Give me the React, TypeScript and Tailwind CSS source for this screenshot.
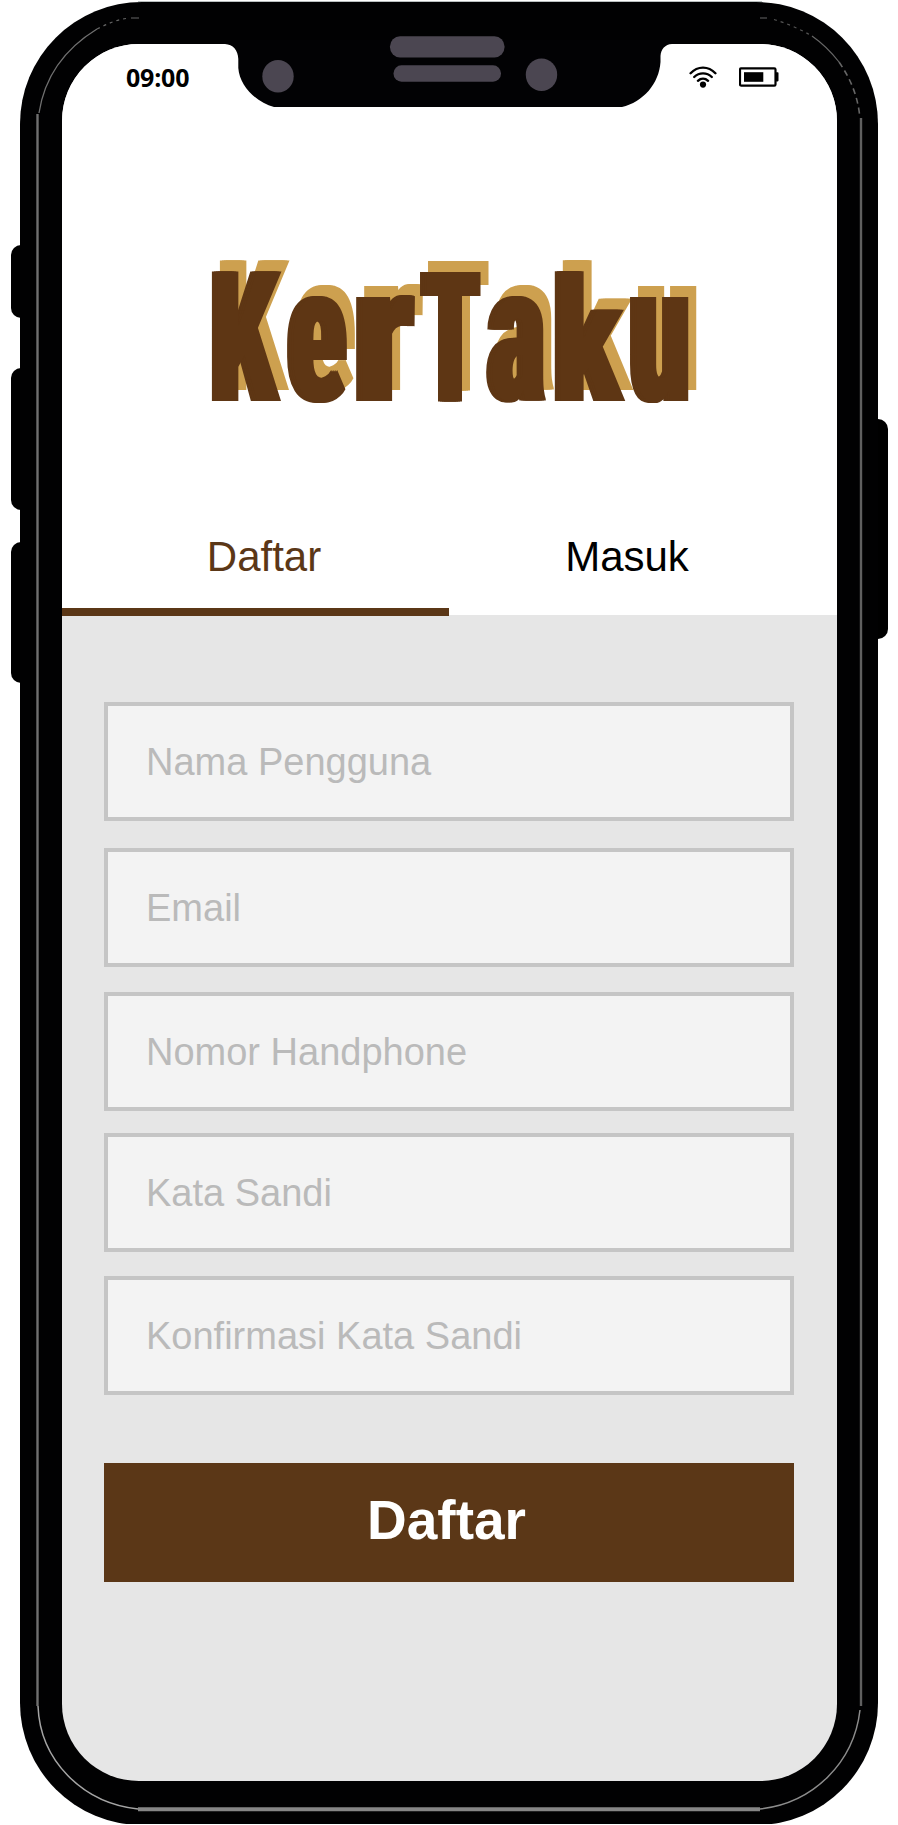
const letters = [
  { char: 'K', transform: 'translate(209 401) scale(1.224 1.82)' },
  { char: 'e', transform: 'translate(286.1 401) scale(1.257 1.95)' },
  { char: 'r', transform: 'translate(350.9 401) scale(1.863 1.976)' },
  { char: 'T', transform: 'translate(420.6 401) scale(1.074 1.82)' },
  { char: 'a', transform: 'translate(486 401) scale(1.273 1.95)' },
  { char: 'k', transform: 'translate(551.6 401) scale(1.423 1.72)' },
  { char: 'u', transform: 'translate(628.1 401) scale(1.257 1.976)' },
];

const fields = [
  { label: 'Nama Pengguna', gap: '' },
  { label: 'Email', gap: 'mt-[27px] pt-px' },
  { label: 'Nomor Handphone', gap: 'mt-[25px]' },
  { label: 'Kata Sandi', gap: 'mt-[22px]' },
  { label: 'Konfirmasi Kata Sandi', gap: 'mt-6' },
];

function Logo() {
  return (
    <svg viewBox="190 240 530 180" className="ml-[128px] h-[180px] w-[530px] shrink-0 overflow-visible" role="img" aria-label="KerTaku">
      <defs>
        <filter id="heavy" filterUnits="userSpaceOnUse" x="190" y="240" width="530" height="180" colorInterpolationFilters="sRGB">
          <feOffset in="SourceGraphic" dx="-3" dy="0" result="a" />
          <feOffset in="SourceGraphic" dx="-1" dy="0" result="b" />
          <feOffset in="SourceGraphic" dx="1" dy="0" result="c" />
          <feOffset in="SourceGraphic" dx="3" dy="0" result="d" />
          <feMerge result="face">
            <feMergeNode in="a" />
            <feMergeNode in="b" />
            <feMergeNode in="c" />
            <feMergeNode in="d" />
          </feMerge>
          <feOffset in="face" dx="8" dy="-11" result="moved" />
          <feFlood floodColor="#cda04f" />
          <feComposite in2="moved" operator="in" result="shade" />
          <feMerge>
            <feMergeNode in="shade" />
            <feMergeNode in="face" />
          </feMerge>
        </filter>
      </defs>
      <g filter="url(#heavy)" className="fill-[#5e3614] font-['Roboto'] text-[100px] font-black [font-stretch:75%]">
        {letters.map((l, i) => (
          <text key={i} transform={l.transform}>{l.char}</text>
        ))}
      </g>
    </svg>
  );
}

function Wifi() {
  return (
    <svg viewBox="0 0 28 22" className="h-[22px] w-7" fill="none" stroke="#000" strokeWidth="2.4" strokeLinecap="round">
      <path d="M1.600 7.200C8.600 -.3 19.400 -.3 26.400 7.200" />
      <path d="M5.200 11c5-4.900 12.600-4.900 17.600 0" />
      <path d="M8.900 14.800c3-2.800 7.200-2.800 10.200 0" />
      <circle cx="14" cy="18.600" r="3.100" fill="#000" stroke="none" />
    </svg>
  );
}

function Battery() {
  return (
    <svg viewBox="0 0 40 20" className="h-5 w-10">
      <rect x="1" y="1.300" width="35.500" height="17.400" rx="1.200" fill="none" stroke="#000" strokeWidth="2.200" />
      <rect x="5" y="5.200" width="19.300" height="9.600" />
      <rect x="36.500" y="5.200" width="3" height="9.200" rx=".8" />
    </svg>
  );
}

function Notch() {
  return (
    <svg viewBox="220 40 460 70" className="absolute left-[158px] -top-1 h-[70px] w-[460px]">
      <path d="M220 40V44H225C233 44.500 238 50 238.300 59V68C239.500 86 256 102 274 107H622C643 102 659 84 660.500 62V56C661 49 665 44.500 672 44H680V40Z" fill="#020204" />
    </svg>
  );
}

function Speaker() {
  return (
    <svg viewBox="250 30 320 70" className="absolute left-[250px] top-[30px] h-[70px] w-[320px]" fill="#4b4651">
      <ellipse cx="278" cy="76.300" rx="15.700" ry="16.300" />
      <rect x="390" y="36.300" width="114.500" height="21.200" rx="10" />
      <rect x="393.500" y="65.300" width="107.500" height="16.400" rx="8" />
      <ellipse cx="541.500" cy="74.800" rx="15.700" ry="16.300" />
    </svg>
  );
}

function Highlights() {
  return (
    <svg viewBox="0 0 898 1825" className="pointer-events-none absolute left-0 top-0 h-[1825px] w-[898px]" fill="none">
      <path d="M138 1.500H762" stroke="#b9bfbf" />
      <path d="M37.500 114V1706" stroke="#707070" strokeWidth="2.400" />
      <path d="M861 118V1706" stroke="#606060" strokeWidth="2.400" />
      <path d="M138 1809.300H760" stroke="#868686" strokeWidth="4" />
      <path d="M38 1706C40 1760 82 1803 138 1809" stroke="#a5a5a5" strokeWidth="1.500" />
      <path d="M860 1710C854 1762 814 1803 760 1809" stroke="#8c8c8c" strokeWidth="1.500" />
      <path d="M39 113C45 74 66 48 97 29" stroke="#707070" strokeWidth="1.300" />
      <path d="M97 29C107 24 116 20 126 18.500" stroke="#666" strokeWidth="1.200" strokeDasharray="3 4" />
      <path d="M131 18H139M760 18H767" stroke="#666" />
      <path d="M774 19.500C786 23 800 29 812 36" stroke="#555" strokeWidth="1.200" strokeDasharray="3 4" />
      <path d="M812 36C822 43 832 53 839 62" stroke="#666" strokeWidth="1.200" />
      <path d="M839 62C850 78 857 94 859.500 114" stroke="#666" strokeWidth="1.600" strokeDasharray="6 4" />
    </svg>
  );
}

export default function App() {
  return (
    <main className="relative h-[1825px] w-[898px] overflow-hidden bg-white font-['Liberation_Sans',sans-serif]">
      <div className="absolute left-[11px] top-[245px] h-[73px] w-6 rounded-[10px] bg-black" />
      <div className="absolute left-[11px] top-[368px] h-[142px] w-6 rounded-[10px] bg-black" />
      <div className="absolute left-[11px] top-[542px] h-[141px] w-6 rounded-[10px] bg-black" />
      <div className="absolute left-[864px] top-[419px] h-[220px] w-6 rounded-[10px] bg-black" />

      <div className="h-[1824px] overflow-hidden pl-5 pt-[2px]">
        <div className="relative h-[1823px] w-[858px] rounded-[122px] bg-[#010102] pl-[42px] pt-[42px]">
          <div className="relative flex h-[1737px] w-[775px] flex-col rounded-[77px] bg-[#e6e6e6]">
            <header className="flex h-[571px] shrink-0 flex-col rounded-t-[77px] bg-white">
              <div className="flex h-[66px] shrink-0 items-center pl-[64px] pr-[58px]">
                <span className="font-['Open_Sans',sans-serif] text-[25px] font-bold leading-none tracking-[-0.2px]">09:00</span>
                <div className="ml-auto flex items-center gap-[22px]">
                  <Wifi />
                  <Battery />
                </div>
              </div>
              <div className="h-[130px] shrink-0" />
              <Logo />
              <nav className="mt-[84px] flex h-[112px] shrink-0 text-[42px] leading-none">
                <a className="flex h-[112px] w-[387px] items-center justify-center border-b-8 border-[#5b3717] pl-[17px] pt-0.5 text-[#5b3717]">Daftar</a>
                <a className="flex h-[112px] flex-1 items-center justify-center border-b-8 border-transparent pr-8 pt-0.5 text-black">Masuk</a>
              </nav>
            </header>
            <form className="flex flex-col px-[42px] pt-[87px]">
              {fields.map((f) => (
                <div key={f.label} className={`${f.gap} flex h-[119px] w-[690px] items-center border-4 border-[#c5c5c5] bg-[#f3f3f3] pl-[38px] text-[38px] leading-none text-[#bababa]`}>
                  {f.label}
                </div>
              ))}
              <button type="button" className="mt-[68px] flex h-[119px] w-[690px] items-center justify-center bg-[#5b3717] pb-1 pr-[5px] text-[55px] font-bold leading-none text-white">
                Daftar
              </button>
            </form>
            <Notch />
          </div>
        </div>
      </div>
      <Speaker />
      <Highlights />
    </main>
  );
}
